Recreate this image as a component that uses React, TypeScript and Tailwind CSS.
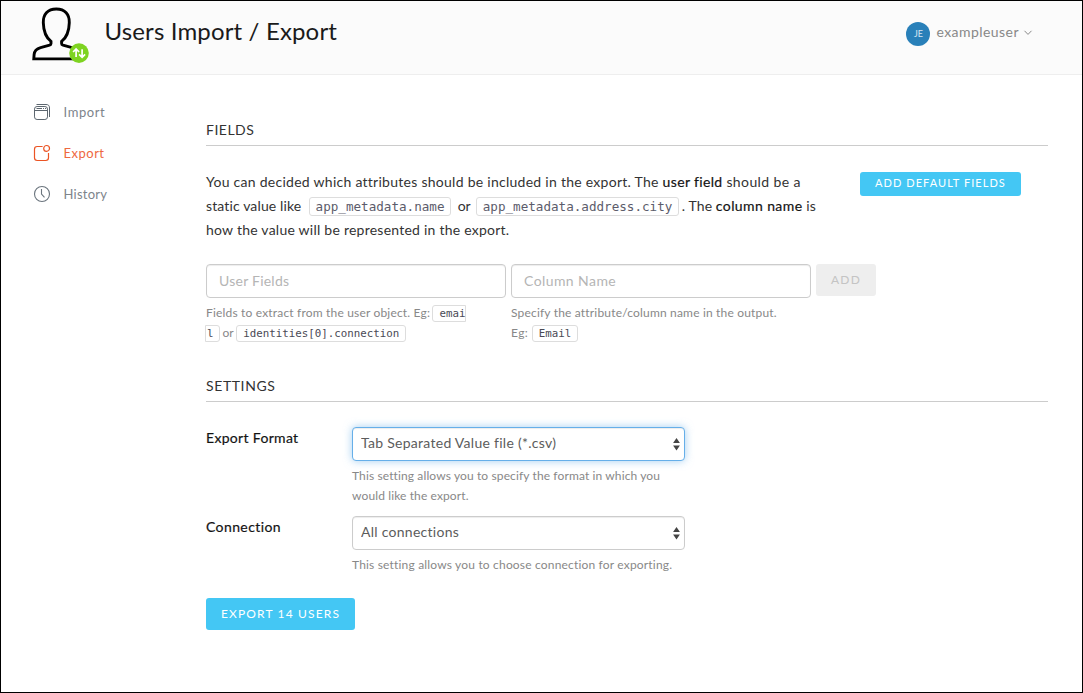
import type { ReactNode } from 'react';

function UserExportLogo() {
  return (
    <svg width="60" height="60" viewBox="0 0 60 60" fill="none" className="block shrink-0">
      <path
        d="M26.3 5C17.5 5 13.1 10.5 13.3 18.6C13.5 26.8 15.6 33.2 21 37.4V39.6C21 40.6 20.6 40.9 19.6 41.2L10.6 43.6C6.2 44.8 4.4 47 4.1 50.6L3.8 54.9H49.5L48.9 50.6C48.4 47 46.4 44.8 42 43.6L33 41.2C32 40.9 31.6 40.6 31.6 39.6V37.4C37 33.2 39.1 26.8 39.3 18.6C39.5 10.5 35.1 5 26.3 5Z"
        stroke="#000"
        strokeWidth="2.9"
      />
      <circle cx="49" cy="49.1" r="9.8" fill="#7ed321" />
      <path d="M46.1 53V45.4M43.1 48L46.1 45L49.1 48M52.1 45.2V53M49.1 50.4L52.1 53.4L55.1 50.4" stroke="#fff" strokeWidth="1.7" />
    </svg>
  );
}

function ImportIcon() {
  return (
    <svg width="18" height="18" viewBox="0 0 18 18" fill="none" stroke="#5c666f" className="block">
      <rect x="1.5" y="3.5" width="13" height="13" rx="2.6" />
      <path d="M3.5 1.5H13C15.4 1.5 16.5 2.6 16.5 5V14M1.5 7.5H14.5M3.5 5.5H9M10 5.5H11M12 5.5H13" />
    </svg>
  );
}

function ExportIcon() {
  return (
    <svg width="18" height="18" viewBox="0 0 18 18" fill="none" stroke="#eb5424" strokeWidth="1.2" className="block">
      <path d="M9.6 2.5H4.2C2.4 2.5 1.5 3.4 1.5 5.2V13.8C1.5 15.6 2.4 16.5 4.2 16.5H12.8C14.6 16.5 15.5 15.6 15.5 13.8V9" />
      <circle cx="13.6" cy="4.4" r="2.9" />
    </svg>
  );
}

function HistoryIcon() {
  return (
    <svg width="18" height="18" viewBox="0 0 18 18" fill="none" stroke="#6b757e" strokeWidth="1.1" className="block">
      <circle cx="9" cy="9" r="7.5" />
      <path d="M8.5 4V9L11.5 12.4" />
    </svg>
  );
}

function NavItem({ icon, children, className }: { icon: ReactNode; children: ReactNode; className: string }) {
  return (
    <li>
      <a className={`flex h-[41px] items-center text-[13px] ${className}`}>
        <span className="mr-[12.5px] shrink-0">{icon}</span>
        <span className="pt-0.5">{children}</span>
      </a>
    </li>
  );
}

function SectionTitle({ children, className }: { children: ReactNode; className: string }) {
  return (
    <h2 className={`border-b border-[#ccc] pb-[5px] text-[14px] leading-5 text-[#333] ${className}`}>{children}</h2>
  );
}

function Code({ children, className }: { children: ReactNode; className: string }) {
  return (
    <code className={`rounded-[3px] border border-[#ddd] px-1.5 py-px font-['DejaVu_Sans_Mono',monospace] text-[12.6px] leading-none tracking-normal text-[#5c5c6b] ${className}`}>
      {children}
    </code>
  );
}

function SmallCode({ children, className }: { children: ReactNode; className: string }) {
  return (
    <code className={`border border-[#ddd] py-px font-['DejaVu_Sans_Mono',monospace] text-[10.8px] leading-none tracking-normal text-[#4a4a55] ${className}`}>
      {children}
    </code>
  );
}

function Strong({ children, className }: { children: ReactNode; className: string }) {
  return <span className={`text-[#111] [-webkit-text-stroke:0.2px_#222] ${className}`}>{children}</span>;
}

function Select({ value, className }: { value: string; className: string }) {
  return (
    <div className="relative">
      <select className={`block h-[34px] w-[333px] appearance-none rounded-[4px] border bg-white px-2 pb-1 text-[14px] text-[#5c5c5c] outline-none ${className}`}>
        <option>{value}</option>
      </select>
      <svg width="7" height="13" viewBox="0 0 7 13" className="absolute right-[5px] top-[11px]" fill="#444">
        <path d="M3.5 0L6.9 5H0.1ZM3.5 12.6L6.9 7.6H0.1Z" />
      </svg>
    </div>
  );
}

const inputClass =
  'block h-[34px] w-[300px] rounded-[4px] border border-[#ccc] bg-white px-3 pb-0.5 text-[14px] shadow-[inset_0_1px_1px_rgba(0,0,0,0.075)] outline-none placeholder:text-[#b5b5b5]';

export default function App() {
  return (
    <div className="flex h-[693px] w-[1083px] flex-col overflow-hidden border border-black bg-white font-['Lato',sans-serif] text-[14px] text-[#333]">
      <header className="flex h-[74px] shrink-0 justify-between border-b border-[#eee] bg-[#fbfbfb]">
        <div className="flex pl-[29px] pt-[3px]">
          <UserExportLogo />
          <h1 className="ml-[14.5px] mt-[11px] text-[24px] leading-8 tracking-[0.15px] text-[#1a1a1a]">Users Import / Export</h1>
        </div>
        <div className="mr-[49px] mt-[21px] flex h-6 items-center">
          <span className="flex size-6 items-center justify-center rounded-full bg-[#2980b9] text-[9px] text-white/80">JE</span>
          <span className="ml-1.5 pb-[5px] tracking-[0.45px] text-[#888]">exampleuser</span>
          <svg width="10" height="6" viewBox="0 0 10 6" fill="none" stroke="#888" className="-mt-0.5 ml-[4px]">
            <path d="M1.5 0.8L5 4.4L8.5 0.8" />
          </svg>
        </div>
      </header>

      <div className="flex">
        <nav className="w-[205px] shrink-0 pl-8 pt-4">
          <ul>
            <NavItem icon={<ImportIcon />} className="tracking-[0.6px] text-[#7d848b]">Import</NavItem>
            <NavItem icon={<ExportIcon />} className="tracking-[0.5px] text-[#ee6840]">Export</NavItem>
            <NavItem icon={<HistoryIcon />} className="tracking-[0.25px] text-[#7d848b]">History</NavItem>
          </ul>
        </nav>

        <main className="w-[842px] pt-[45px]">
          <SectionTitle className="tracking-[0.5px]">FIELDS</SectionTitle>
          <div className="mt-6 flex items-start justify-between pr-[27px]">
            <p className="whitespace-nowrap leading-6 tracking-[0.27px]">
              <span>You can decided which attributes should be included in the export. The</span>{' '}
              <Strong className="tracking-[0.35px]">user field</Strong>{' '}
              <span className="tracking-[0.4px]">should be a</span>
              <br />
              <span className="tracking-[0.13px]">
                static value like <Code className="ml-[3.5px] mr-[2.5px]">app_metadata.name</Code>{' '}
                <span className="tracking-[-0.1px]">or</span>{' '}
                <Code className="ml-[1.5px] mr-[2.5px]">app_metadata.address.city</Code>
                <span className="tracking-[0.1px]">. The </span>
              </span>
              <Strong className="tracking-[0.4px]">column name</Strong> <span className="tracking-normal">is</span>
              <br />
              <span className="tracking-[0.24px]">how the value will be represented in the export.</span>
            </p>
            <button className="mt-0.5 h-6 w-[161px] rounded-[3px] bg-[#44c7f4] pb-0.5 text-[11px] tracking-[1.05px] text-white">
              ADD DEFAULT FIELDS
            </button>
          </div>

          <div className="mt-[22px] flex gap-[5px]">
            <div>
              <input className={`${inputClass} tracking-[0.24px]`} placeholder="User Fields" />
              <p className="mt-[5px] whitespace-nowrap text-[12px] leading-5 tracking-[0.18px] text-[#888]">
                Fields to extract from the user object. Eg:{' '}
                <SmallCode className="-ml-px rounded-l-[3px] pl-1.5 pr-0">emai</SmallCode>
                <br />
                <SmallCode className="-ml-px rounded-r-[3px] pl-px pr-[5px]">l</SmallCode>
                <span className="tracking-[-0.1px]"> or </span>
                <SmallCode className="rounded-[3px] px-1.5">identities[0].connection</SmallCode>
              </p>
            </div>
            <div>
              <input className={`${inputClass} tracking-[0.42px]`} placeholder="Column Name" />
              <p className="mt-[5px] whitespace-nowrap text-[12px] leading-5 tracking-[0.18px] text-[#888]">
                Specify the attribute/column name in the output.
                <br />
                <span className="tracking-[0.4px]">Eg: </span>
                <SmallCode className="rounded-[3px] px-1.5">Email</SmallCode>
              </p>
            </div>
            <button className="h-8 w-[60px] rounded-[3px] bg-[#eee] text-[12px] tracking-[1.2px] text-[#c4c4c4]">ADD</button>
          </div>

          <SectionTitle className="mt-[33px] tracking-[0.6px]">SETTINGS</SectionTitle>
          <div className="mt-[25px] flex">
            <label className="w-[146px] pt-px leading-5">
              <Strong className="tracking-[0.32px]">Export Format</Strong>
            </label>
            <div>
              <Select
                value="Tab Separated Value file (*.csv)"
                className="border-[#66afe9] tracking-[0.28px] shadow-[inset_0_1px_1px_rgba(0,0,0,0.075),0_0_8px_rgba(102,175,233,0.6)]"
              />
              <p className="mt-[5px] whitespace-nowrap text-[12px] leading-5 tracking-[0.12px] text-[#888]">
                This setting allows you to specify the format in which you
                <br />
                would like the export.
              </p>
            </div>
          </div>
          <div className="mt-2.5 flex">
            <label className="w-[146px] pt-px leading-5">
              <Strong className="tracking-[0.4px]">Connection</Strong>
            </label>
            <div>
              <Select
                value="All connections"
                className="border-[#ccc] tracking-[0.27px] shadow-[inset_0_1px_1px_rgba(0,0,0,0.075)]"
              />
              <p className="mt-[5px] whitespace-nowrap text-[12px] leading-5 tracking-[0.18px] text-[#888]">
                This setting allows you to choose connection for exporting.
              </p>
            </div>
          </div>
          <button className="mt-[23px] block h-8 w-[149px] rounded-[3px] bg-[#44c7f4] text-[12px] tracking-[1.15px] text-white">
            EXPORT 14 USERS
          </button>
        </main>
      </div>
    </div>
  );
}
